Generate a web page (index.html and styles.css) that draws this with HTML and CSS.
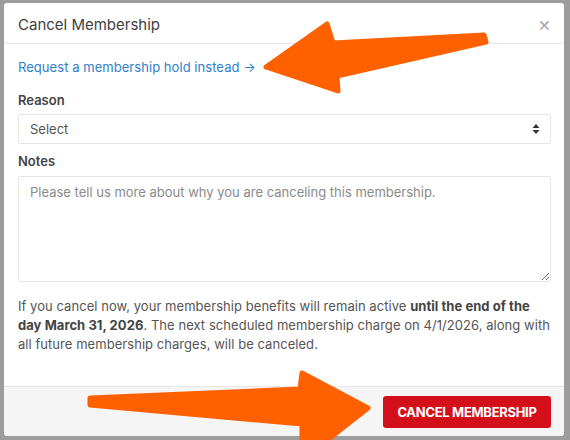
FILE: index.html
```html
<!DOCTYPE html>
<html lang="en">
<head>
<meta charset="utf-8">
<title>Cancel Membership</title>
<link rel="stylesheet" href="styles.css">
</head>
<body>
<div class="backdrop">
  <div class="modal">
    <div class="modal-header">
      <h2 class="modal-title">Cancel Membership</h2>
      <span class="close">&times;</span>
    </div>
    <div class="modal-body">
      <a class="hold-link" href="#">Request a membership hold instead &rarr;</a>
      <label class="field-label">Reason</label>
      <div class="select">
        <span>Select</span>
        <svg class="select-caret" width="8" height="12" viewBox="0 0 8 12"><path d="M4 1 L7.5 5 H0.5 Z M4 11 L0.5 7 H7.5 Z" fill="#333"/></svg>
      </div>
      <label class="field-label notes-label">Notes</label>
      <textarea class="notes" placeholder="Please tell us more about why you are canceling this membership."></textarea>
      <p class="info">If you cancel now, your membership benefits will remain active <strong>until the end of the day March 31, 2026</strong>. The next scheduled membership charge on 4/1/2026, along with all future membership charges, will be canceled.</p>
    </div>
    <div class="modal-footer">
      <button class="btn-cancel">CANCEL MEMBERSHIP</button>
    </div>
  </div>
</div>
<svg class="arrows" width="570" height="440" viewBox="0 0 570 440">
  <polygon points="266,67 327,24 333,43 484,35 486,42 337,76 338,91" fill="#ff6000" stroke="#ff6000" stroke-width="5" stroke-linejoin="round"/>
  <polygon points="90,398 300,389 302,373 368,408 302,460 302,424 90,405" fill="#ff6000" stroke="#ff6000" stroke-width="5" stroke-linejoin="round"/>
</svg>
</body>
</html>
```
FILE: styles.css
```css
html, body {
  margin: 0;
  padding: 0;
}
body {
  width: 570px;
  height: 440px;
  overflow: hidden;
  background: #9c9c9c;
  font-family: Inter, "Noto Sans", sans-serif;
  position: relative;
}
.backdrop {
  padding: 3px 0 0 4px;
}
.modal {
  width: 560px;
  height: 433px;
  background: #fff;
  border-radius: 3px;
  overflow: hidden;
  display: flex;
  flex-direction: column;
}
.modal-header {
  height: 41px;
  box-sizing: border-box;
  border-bottom: 1px solid #e6e6e6;
  display: flex;
  align-items: center;
  justify-content: space-between;
  padding: 2px 14px 0;
}
.modal-title {
  margin: 0;
  font-size: 15px;
  font-weight: 400;
  color: #404040;
}
.close {
  font-size: 20px;
  color: #aaa;
  line-height: 1;
  margin-right: -1px;
}
.modal-body {
  flex: 1;
  padding: 13px 13px 0 14px;
  display: flex;
  flex-direction: column;
}
.hold-link {
  color: #2f80c8;
  text-decoration: none;
  font-size: 13px;
  line-height: 20px;
  letter-spacing: 0.05px;
}
.field-label {
  margin-top: 13px;
  font-size: 13px;
  font-weight: 600;
  line-height: 20px;
  color: #444;
}
.notes-label {
  margin-top: 7px;
}
.select {
  margin-top: 4px;
  height: 30px;
  box-sizing: border-box;
  border: 1px solid #e4e4e4;
  border-radius: 3px;
  display: flex;
  align-items: center;
  justify-content: space-between;
  padding: 0 10px 0 11px;
  font-size: 13px;
  color: #555;
}
.notes {
  margin-top: 5px;
  height: 106px;
  box-sizing: border-box;
  border: 1px solid #e4e4e4;
  border-radius: 3px;
  padding: 7px 11px;
  font-family: Inter, "Noto Sans", sans-serif;
  font-size: 13px;
  resize: vertical;
  outline: none;
}
.notes::placeholder {
  color: #8a8a8a;
}
.info {
  margin: 15px 0 0;
  font-size: 13px;
  line-height: 19px;
  color: #555;
  letter-spacing: 0.05px;
}
.info strong {
  color: #444;
  font-weight: 700;
}
.modal-footer {
  height: 50px;
  box-sizing: border-box;
  background: #f5f5f5;
  border-top: 1px solid #e8e8e8;
  display: flex;
  align-items: center;
  justify-content: flex-end;
  padding: 1px 13px 0;
}
.btn-cancel {
  width: 168px;
  height: 32px;
  background: #d3101a;
  color: #fff;
  border: none;
  border-radius: 3px;
  font-family: Inter, "Noto Sans", sans-serif;
  font-size: 13px;
  font-weight: 700;
  letter-spacing: -0.3px;
}
.arrows {
  position: absolute;
  left: 0;
  top: 0;
  pointer-events: none;
}
```
